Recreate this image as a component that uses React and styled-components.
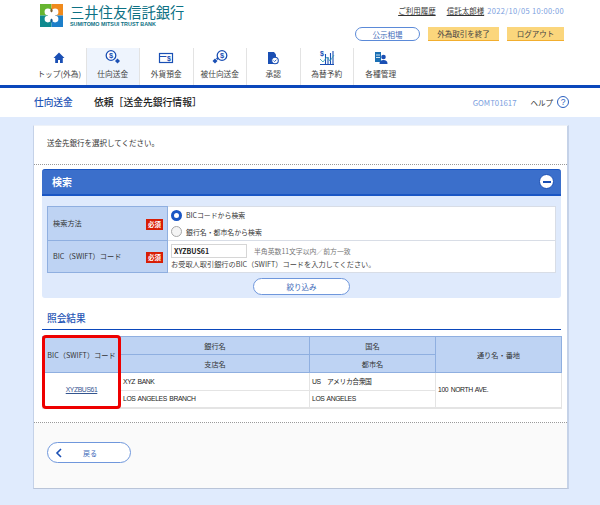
import styled, { createGlobalStyle } from 'styled-components'

const NAV = [
  { label: 'トップ(外為)', icon: 'home' },
  { label: '仕向送金', icon: 'send', active: true },
  { label: '外貨預金', icon: 'deposit' },
  { label: '被仕向送金', icon: 'receive' },
  { label: '承認', icon: 'approve' },
  { label: '為替予約', icon: 'chart' },
  { label: '各種管理', icon: 'admin', last: true },
]

const Logo = () => (
  <svg width="23" height="23" viewBox="0 0 23 23">
    <rect x="0" y="0" width="11.5" height="11.5" fill="#67b530" />
    <rect x="11.5" y="0" width="11.5" height="11.5" fill="#f08a1c" />
    <rect x="0" y="11.5" width="11.5" height="11.5" fill="#0f8a8f" />
    <rect x="11.5" y="11.5" width="11.5" height="11.5" fill="#1d7fc9" />
    <circle cx="7.9" cy="7.9" r="3.3" fill="#fff" />
    <circle cx="15.1" cy="7.9" r="3.3" fill="#fff" />
    <circle cx="7.9" cy="15.1" r="3.3" fill="#fff" />
    <circle cx="15.1" cy="15.1" r="3.3" fill="#fff" />
    <rect x="8" y="8" width="7" height="7" fill="#fff" />
    <path d="M11.500 4l1.300 3-1.300 1.500L10.200 7z" fill="#7a5c2e" />
    <path d="M11.500 19l1.300-3-1.300-1.500L10.200 16z" fill="#155a8a" />
  </svg>
)

const Dollar = ({ cx, cy, r }) => (
  <>
    <circle cx={cx} cy={cy} r={r} fill="#fff" stroke="#1a4fb4" strokeWidth="1.300" />
    <text x={cx} y={cy + 2.6} fontSize="7.5" fontFamily="Liberation Sans" fontWeight="700" fill="#1a4fb4" textAnchor="middle">$</text>
  </>
)

const NavIcon = ({ name }) => {
  if (name === 'home') {
    return (
      <svg width="16" height="16" viewBox="0 0 16 16">
        <path d="M8 2.500L2.500 8H4.200v5h2.800v-3h2v3h2.800V8h1.700z" fill="#1a4fb4" />
      </svg>
    )
  }
  if (name === 'send') {
    return (
      <svg width="18" height="16" viewBox="0 0 18 16">
        <Dollar cx={7} cy={5.5} r={4.8} />
        <path d="M13.500 8.500l2.500 2.500-2.500 2.500-2.500-2.500z" fill="#1a4fb4" />
      </svg>
    )
  }
  if (name === 'deposit') {
    return (
      <svg width="16" height="16" viewBox="0 0 16 16">
        <rect x="1.500" y="3.500" width="13" height="9" fill="#fff" stroke="#1a4fb4" strokeWidth="1.200" />
        <path d="M1.500 6.500h7" stroke="#1a4fb4" strokeWidth="1" />
        <text x="11" y="10.500" fontSize="7" fontFamily="Liberation Sans" fontWeight="700" fill="#1a4fb4" textAnchor="middle">$</text>
      </svg>
    )
  }
  if (name === 'receive') {
    return (
      <svg width="18" height="16" viewBox="0 0 18 16">
        <Dollar cx={11} cy={5.5} r={4.8} />
        <path d="M4 8.500l2.500 2.500-2.500 2.500-2.500-2.500z" fill="#1a4fb4" />
        <path d="M6 7.500l1.500 1.500-1 1-1.500-1.500z" fill="#1a4fb4" />
      </svg>
    )
  }
  if (name === 'approve') {
    return (
      <svg width="16" height="16" viewBox="0 0 16 16">
        <path d="M3 2h6l2 2.500V9L8 14H3z" fill="#1a4fb4" />
        <circle cx="10" cy="10.500" r="3.300" fill="#fff" stroke="#1a4fb4" strokeWidth="1.100" />
        <path d="M8.600 10.500l1 1 1.800-1.800" stroke="#1a4fb4" strokeWidth=".9" fill="none" />
      </svg>
    )
  }
  if (name === 'chart') {
    return (
      <svg width="16" height="16" viewBox="0 0 16 16">
        <text x="3" y="6" fontSize="7" fontFamily="Liberation Sans" fontWeight="700" fill="#1a4fb4" textAnchor="middle">$</text>
        <path d="M6.500 4v11M9 7v8M11.500 3v12M14 1v14" stroke="#1a4fb4" strokeWidth="1.100" />
        <path d="M1 9l3 3 4-5 3 4 4-6" stroke="#2a9fb0" strokeWidth=".8" fill="none" />
        <path d="M1 14.500h14" stroke="#1a4fb4" strokeWidth="1" />
      </svg>
    )
  }
  return (
    <svg width="16" height="16" viewBox="0 0 16 16">
      <rect x="2" y="2" width="6" height="10" fill="#1a6fb4" />
      <path d="M3 5h4M3 7.500h4" stroke="#fff" strokeWidth=".8" />
      <circle cx="10.500" cy="7" r="2.300" fill="#1a4fb4" />
      <path d="M6.500 14c0-3 1.500-4 4-4s4 1 4 4z" fill="#1a4fb4" />
    </svg>
  )
}

export default function App() {
  return (
    <>
      <GlobalStyle />
      <Header>
        <TopRow>
          <Brand>
            <Logo />
            <BrandText>
              <BrandName>三井住友信託銀行</BrandName>
              <BrandSub>SUMITOMO MITSUI TRUST BANK</BrandSub>
            </BrandText>
          </Brand>
          <Utility>
            <UserRow>
              <UserLink>ご利用履歴</UserLink>
              <UserLink>信託太郎様</UserLink>
              <DateText>2022/10/05 10:00:00</DateText>
            </UserRow>
            <ButtonRow>
              <PillSmall>公示相場</PillSmall>
              <OrangeButton $w={71}>外為取引を終了</OrangeButton>
              <OrangeButton $w={57}>ログアウト</OrangeButton>
            </ButtonRow>
          </Utility>
        </TopRow>
        <Nav>
          {NAV.map((item) => (
            <NavItem key={item.label} $active={item.active} $last={item.last}>
              <NavIcon name={item.icon} />
              <NavLabel>{item.label}</NavLabel>
            </NavItem>
          ))}
        </Nav>
      </Header>

      <TitleBar>
        <TitleMain>仕向送金</TitleMain>
        <TitleSub>依頼［送金先銀行情報］</TitleSub>
        <ScreenId>GOMT01617</ScreenId>
        <HelpText>ヘルプ</HelpText>
        <HelpIcon>?</HelpIcon>
      </TitleBar>

      <Main>
        <Card>
          <Lead>送金先銀行を選択してください。</Lead>

          <Content>
            <PanelHead>
              <PanelTitle>検索</PanelTitle>
              <Collapse />
            </PanelHead>
            <PanelBody>
              <FormTable>
                <tbody>
                  <tr>
                    <FormTh>
                      <ThInner>
                        検索方法
                        <Required>必須</Required>
                      </ThInner>
                    </FormTh>
                    <FormTd>
                      <RadioRow>
                        <Radio $on />
                        BICコードから検索
                      </RadioRow>
                      <RadioRow>
                        <Radio />
                        銀行名・都市名から検索
                      </RadioRow>
                    </FormTd>
                  </tr>
                  <tr>
                    <FormTh>
                      <ThInner>
                        BIC（SWIFT）コード
                        <Required>必須</Required>
                      </ThInner>
                    </FormTh>
                    <FormTd>
                      <InputRow>
                        <FakeInput>XYZBUS61</FakeInput>
                        <Hint>半角英数11文字以内／前方一致</Hint>
                      </InputRow>
                      <Note>お受取人取引銀行のBIC（SWIFT）コードを入力してください。</Note>
                    </FormTd>
                  </tr>
                </tbody>
              </FormTable>
              <PillRow>
                <NarrowButton>絞り込み</NarrowButton>
              </PillRow>
            </PanelBody>

            <ResultTitle>照会結果</ResultTitle>
            <ResultWrap>
              <ResultTable>
                <colgroup>
                  <col style={{ width: 78 }} />
                  <col style={{ width: 189 }} />
                  <col style={{ width: 126 }} />
                  <col style={{ width: 126 }} />
                </colgroup>
                <thead>
                  <tr>
                    <HeadCell rowSpan={2}>BIC（SWIFT）コード</HeadCell>
                    <HeadCell>銀行名</HeadCell>
                    <HeadCell>国名</HeadCell>
                    <HeadCell rowSpan={2}>通り名・番地</HeadCell>
                  </tr>
                  <tr>
                    <HeadCell>支店名</HeadCell>
                    <HeadCell>都市名</HeadCell>
                  </tr>
                </thead>
                <tbody>
                  <tr>
                    <BodyCell rowSpan={2} $center>
                      <BicLink>XYZBUS61</BicLink>
                    </BodyCell>
                    <BodyCell>XYZ BANK</BodyCell>
                    <BodyCell>US　アメリカ合衆国</BodyCell>
                    <BodyCell rowSpan={2}>100 NORTH AVE.</BodyCell>
                  </tr>
                  <tr>
                    <BodyCell>LOS ANGELES BRANCH</BodyCell>
                    <BodyCell>LOS ANGELES</BodyCell>
                  </tr>
                </tbody>
              </ResultTable>
              <Highlight />
            </ResultWrap>
          </Content>

          <Footer>
            <BackButton>
              <svg width="8" height="10" viewBox="0 0 8 10">
                <path d="M6 1L2 5l4 4" fill="none" stroke="#1a4fb4" strokeWidth="1.600" />
              </svg>
              <BackLabel>戻る</BackLabel>
            </BackButton>
          </Footer>
        </Card>
      </Main>
    </>
  )
}

const GlobalStyle = createGlobalStyle`
  * {
    box-sizing: border-box;
  }

  body {
    margin: 0;
    background: #e0ebfd;
    font-family: "Noto Sans CJK JP", "Liberation Sans", sans-serif;
    color: #333;
    font-size: 7.5px;
  }
`

const Header = styled.header`
  height: 88px;
  background: #fff;
  border-bottom: 3px solid #0b47bb;
`

const TopRow = styled.div`
  height: 48px;
  padding: 4px 36px 0 40px;
  display: flex;
  justify-content: space-between;
`

const Brand = styled.div`
  display: flex;
  align-items: flex-start;
  gap: 7px;
`

const BrandText = styled.div`
  display: flex;
  flex-direction: column;
`

const BrandName = styled.div`
  font-size: 14.3px;
  line-height: 16px;
  color: #0d7184;
  white-space: nowrap;
`

const BrandSub = styled.div`
  font-family: "Liberation Sans", sans-serif;
  font-size: 5.4px;
  line-height: 8px;
  font-weight: 700;
  color: #0d7184;
  white-space: nowrap;
`

const Utility = styled.div`
  display: flex;
  flex-direction: column;
  align-items: flex-end;
`

const UserRow = styled.div`
  height: 14px;
  margin-top: -1px;
  display: flex;
  align-items: center;
`

const UserLink = styled.span`
  font-size: 7.5px;
  text-decoration: underline;
  margin-right: 11px;
  color: #333;

  &:nth-child(2) {
    margin-right: 3px;
  }
`

const DateText = styled.span`
  font-size: 7.5px;
  color: #7a9ede;
  letter-spacing: 0.36px;
`

const ButtonRow = styled.div`
  margin-top: 10px;
  display: flex;
  align-items: center;
  gap: 8px;
`

const PillSmall = styled.div`
  width: 65px;
  height: 14px;
  border: 1px solid #5b8ad8;
  border-radius: 7px;
  color: #3a68b8;
  background: #fff;
  font-size: 7.5px;
  display: flex;
  align-items: center;
  justify-content: center;
`

const OrangeButton = styled.div`
  width: ${(p) => p.$w}px;
  height: 14px;
  background: #fbd67c;
  border-bottom: 1px solid #f2ae2e;
  color: #444;
  font-size: 7.5px;
  display: flex;
  align-items: center;
  justify-content: center;
`

const Nav = styled.nav`
  height: 37px;
  padding-left: 33px;
  display: flex;
`

const NavItem = styled.div`
  width: 53.5px;
  display: flex;
  flex-direction: column;
  align-items: center;
  padding-top: 2px;
  background: ${(p) => (p.$active ? '#eef4fd' : '#fff')};
  border-right: ${(p) => (p.$last ? 'none' : '1px solid #e3e3e3')};
`

const NavLabel = styled.span`
  margin-top: 2px;
  font-size: 7.7px;
  line-height: 11px;
  white-space: nowrap;
  color: #444;
`

const TitleBar = styled.div`
  height: 29px;
  padding: 0 31px 1px 34px;
  background: #fff;
  display: flex;
  align-items: center;
`

const TitleMain = styled.div`
  font-size: 9.7px;
  font-weight: 500;
  color: #1f55b5;
  width: 60px;
`

const TitleSub = styled.div`
  font-size: 9.8px;
  font-weight: 500;
  color: #222;
`

const ScreenId = styled.div`
  margin-left: auto;
  font-size: 7.8px;
  color: #7a9ede;
`

const HelpText = styled.div`
  margin-left: 14px;
  font-size: 7.5px;
  color: #333;
`

const HelpIcon = styled.div`
  margin-left: 4px;
  width: 12px;
  height: 12px;
  border: 1px solid #2a5fc0;
  border-radius: 50%;
  color: #2a5fc0;
  font-size: 8.5px;
  line-height: 10px;
  text-align: center;
  font-family: "Liberation Sans", sans-serif;
`

const Main = styled.main`
  padding: 8px 31px 0 33px;
`

const Card = styled.div`
  height: 364px;
  display: flex;
  flex-direction: column;
  background: #fff;
  border-left: 1px solid #c5d2e8;
  border-right: 2px solid #c5d2e8;
  border-bottom: 1px solid #b9c4d8;
  border-top: 1px solid #eef2f8;
`

const Lead = styled.div`
  height: 39px;
  padding: 11px 0 0 13px;
  font-size: 7.5px;
  line-height: 11px;
  border-bottom: 1px dotted #999;
`

const Content = styled.div`
  flex: 0 0 258px;
  padding: 4px 6px 0 8px;
  border-bottom: 1px dotted #999;
`

const PanelHead = styled.div`
  height: 27px;
  padding: 0 7px 1px 10px;
  background: #3b6fcb;
  border-top: 1px solid #1a56c4;
  border-bottom: 2px solid #1a56c4;
  border-radius: 3px 3px 0 0;
  display: flex;
  align-items: center;
  justify-content: space-between;
`

const PanelTitle = styled.div`
  color: #fff;
  font-size: 10px;
  font-weight: 700;
`

const Collapse = styled.div`
  width: 15px;
  height: 15px;
  border-radius: 50%;
  background: #fff;
  border: 1px solid #1a4fb4;
  display: flex;
  align-items: center;
  justify-content: center;

  &::before {
    content: '';
    width: 8px;
    height: 2px;
    background: #1a4fb4;
  }
`

const PanelBody = styled.div`
  height: 102px;
  padding: 10px 5px 0;
  background: #dfeafc;
  border-radius: 0 0 3px 3px;
`

const FormTable = styled.table`
  width: 509px;
  height: 66px;
  border-collapse: collapse;
  table-layout: fixed;
  background: #fff;
  border: 1px solid #d8dde6;
`

const FormTh = styled.th`
  width: 120px;
  height: 32px;
  padding: 0 4px 0 5px;
  background: #bed3f3;
  border: 1px solid #8fafe0;
  font-weight: 400;
  text-align: left;
  font-size: 7.2px;
`

const ThInner = styled.div`
  display: flex;
  align-items: center;
  justify-content: space-between;
  white-space: nowrap;
  padding-bottom: 1px;
`

const Required = styled.span`
  width: 17px;
  height: 11px;
  margin-top: 2px;
  background: #d81e05;
  color: #fff;
  font-size: 6.5px;
  font-weight: 700;
  line-height: 11px;
  text-align: center;
`

const FormTd = styled.td`
  padding: 0 3px;
  border-bottom: 1px solid #d8dde6;
  font-size: 6.9px;
`

const RadioRow = styled.div`
  height: 16.5px;
  display: flex;
  align-items: center;
  gap: 4px;
`

const Radio = styled.span`
  width: 11px;
  height: 11px;
  border-radius: 50%;
  background: ${(p) => (p.$on ? '#fff' : '#f4f4f4')};
  border: ${(p) => (p.$on ? '3px solid #1a56c4' : '1px solid #a8a8a8')};
`

const InputRow = styled.div`
  display: flex;
  align-items: center;
`

const FakeInput = styled.div`
  width: 76px;
  height: 14px;
  padding-left: 2px;
  border: 1px solid #d6d6d6;
  background: #fff;
  font-size: 7px;
  font-weight: 700;
  line-height: 12px;
  color: #222;
`

const Hint = styled.span`
  margin-left: 7px;
  font-size: 6.85px;
  color: #777;
`

const Note = styled.div`
  margin-top: 1px;
  font-size: 7.2px;
  line-height: 11px;
  color: #444;
`

const PillRow = styled.div`
  margin-top: 5px;
  display: flex;
  justify-content: center;
`

const NarrowButton = styled.div`
  width: 97px;
  height: 17px;
  border: 1px solid #6f97dc;
  border-radius: 9px;
  background: #fff;
  color: #3a68b8;
  font-size: 7.5px;
  display: flex;
  align-items: center;
  justify-content: center;
`

const ResultTitle = styled.div`
  height: 32px;
  padding: 13px 0 0 5px;
  font-size: 9.7px;
  line-height: 14px;
  font-weight: 500;
  color: #1f55b5;
  border-bottom: 1px solid #0b47bb;
`

const ResultWrap = styled.div`
  position: relative;
  margin-top: 6px;
`

const ResultTable = styled.table`
  width: 519px;
  border-collapse: collapse;
  table-layout: fixed;
  border-bottom: 2px solid #e4e4e4;
`

const HeadCell = styled.th`
  height: 18px;
  padding: 0;
  background: #bed3f3;
  border: 1px solid #8fafe0;
  font-size: 7.2px;
  font-weight: 400;
  color: #333;
  white-space: nowrap;
`

const BodyCell = styled.td`
  height: 17.5px;
  padding: 0 2px;
  background: #fff;
  border: 1px solid #e4e4e4;
  font-family: "Liberation Sans", "Noto Sans CJK JP", sans-serif;
  font-size: 6.8px;
  letter-spacing: -0.4px;
  word-spacing: 1px;
  text-align: ${(p) => (p.$center ? 'center' : 'left')};
  color: #222;
`

const BicLink = styled.span`
  color: #34558f;
  text-decoration: underline;
`

const Highlight = styled.div`
  position: absolute;
  left: 0;
  top: -1px;
  width: 79px;
  height: 74px;
  border: 3px solid #ee0000;
  border-radius: 4px;
  pointer-events: none;
`

const Footer = styled.div`
  flex: 1;
  padding: 19px 13px 0;
  background: #fafafa;
`

const BackButton = styled.div`
  width: 84px;
  height: 21px;
  padding-left: 7px;
  border: 1px solid #6f97dc;
  border-radius: 11px;
  background: #fff;
  display: flex;
  align-items: center;
`

const BackLabel = styled.span`
  margin-left: 20px;
  font-size: 7px;
  color: #3a68b8;
`
